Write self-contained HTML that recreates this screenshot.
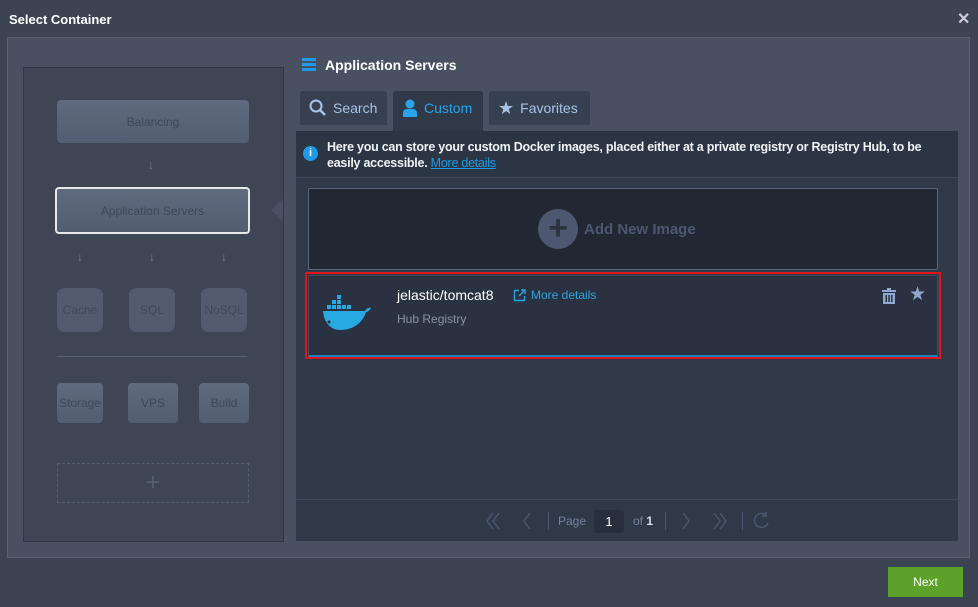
<!DOCTYPE html>
<html><head><style>
*{margin:0;padding:0;box-sizing:border-box}
body{width:978px;height:607px;background:#3c4352;font-family:"Liberation Sans",sans-serif;position:relative;overflow:hidden;color:#fff}
.a{position:absolute}
.title{left:9px;top:12px;font-size:13px;font-weight:bold;color:#fff}
.frame{left:7px;top:37px;width:963px;height:521px;background:#485062;border:1px solid #596173}
.left{left:23px;top:67px;width:261px;height:475px;background:#3e4555;border:1px solid #2f3542}
.box{background:linear-gradient(#606a7e,#535d70);border-radius:4px;color:#3f4759;font-size:12px;display:flex;align-items:center;justify-content:center}
.cyl{background:#535c6e;border-radius:8px/7px;color:#3f4759;font-size:12px;display:flex;align-items:center;justify-content:center}
.arr{color:#7a8294;font-size:12px;font-weight:bold}
.tab{top:91px;height:34px;background:#364051;border-radius:3px 3px 0 0;display:flex;align-items:center;gap:6px;padding-left:9px;font-size:14px;color:#a9c3e6}
.content{left:296px;top:131px;width:662px;height:410px;background:#2f3948}
.pg{color:#4d5870;font-size:13px}
</style></head><body>
<div class="a title">Select Container</div>
<div class="a" style="left:957px;top:9px;font-size:16px;font-weight:bold;color:#ccd">✕</div>
<div class="a frame"></div>
<div class="a left"></div>
<div class="a box" style="left:57px;top:100px;width:192px;height:43px">Balancing</div>
<div class="a arr" style="left:148px;top:158px">↓</div>
<div class="a box" style="left:55px;top:187px;width:195px;height:47px;border:2px solid #e6e8ec">Application Servers</div>
<div class="a" style="left:271px;top:199px;width:0;height:0;border-top:11px solid transparent;border-bottom:11px solid transparent;border-right:12px solid #485062"></div>
<div class="a arr" style="left:77px;top:250px">↓</div>
<div class="a arr" style="left:149px;top:250px">↓</div>
<div class="a arr" style="left:221px;top:250px">↓</div>
<div class="a cyl" style="left:57px;top:288px;width:46px;height:44px">Cache</div>
<div class="a cyl" style="left:129px;top:288px;width:46px;height:44px">SQL</div>
<div class="a cyl" style="left:201px;top:288px;width:46px;height:44px">NoSQL</div>
<div class="a" style="left:57px;top:356px;width:190px;height:1px;background:#566072"></div>
<div class="a box" style="left:57px;top:383px;width:46px;height:40px">Storage</div>
<div class="a box" style="left:128px;top:383px;width:50px;height:40px">VPS</div>
<div class="a box" style="left:199px;top:383px;width:50px;height:40px">Build</div>
<div class="a" style="left:57px;top:463px;width:192px;height:40px;border:1px dashed #566072;color:#566072;font-size:24px;text-align:center;line-height:38px">+</div>

<div class="a" style="left:302px;top:58px;width:14px;height:3px;background:#1e9be8;box-shadow:0 5px 0 #1e9be8,0 10px 0 #1e9be8"></div>
<div class="a" style="left:325px;top:57px;font-size:14px;font-weight:bold">Application Servers</div>

<div class="a tab" style="left:300px;width:87px;height:34px"><svg width="18" height="18" viewBox="0 0 18 18"><circle cx="7" cy="7" r="5.5" fill="none" stroke="#a9c3e6" stroke-width="2"/><path d="M11 11l5 5" stroke="#a9c3e6" stroke-width="2.5"/></svg>Search</div>
<div class="a tab" style="left:393px;width:90px;height:40px;background:#2f3948;color:#29a3ea;padding-bottom:6px"><svg width="16" height="18" viewBox="0 0 16 18"><circle cx="8" cy="5" r="4.5" fill="#29a3ea"/><path d="M1 18v-4a4 4 0 0 1 4-4h6a4 4 0 0 1 4 4v4z" fill="#29a3ea"/></svg>Custom</div>
<div class="a tab" style="left:489px;width:101px;height:34px"><span style="font-size:18px;color:#a9c3e6">★</span>Favorites</div>

<div class="a content"></div>
<div class="a" style="left:296px;top:131px;width:662px;height:47px;background:#2c3543;border-bottom:1px solid #404a5a"></div>
<div class="a" style="left:303px;top:146px;width:15px;height:15px;border-radius:50%;background:#1e9be8;color:#fff;font-size:11px;font-weight:bold;text-align:center;line-height:15px">i</div>
<div class="a" style="left:327px;top:139px;width:625px;font-size:12.5px;line-height:16px;font-weight:bold;color:#f0f2f5;letter-spacing:-0.25px">Here you can store your custom Docker images, placed either at a private registry or Registry Hub, to be easily accessible. <span style="color:#1e9be8;text-decoration:underline;font-weight:normal">More details</span></div>

<div class="a" style="left:308px;top:188px;width:630px;height:82px;background:#212833;border:1px solid #5a6478;border-radius:2px"></div>
<div class="a" style="left:538px;top:209px;width:40px;height:40px;border-radius:50%;background:#4d5870;color:#2b3240;font-size:34px;font-weight:bold;text-align:center;line-height:39px">+</div>
<div class="a" style="left:584px;top:221px;font-size:15px;font-weight:bold;color:#4d5870">Add New Image</div>

<div class="a" style="left:305px;top:272px;width:636px;height:87px;border:2px solid #e0141a"></div>
<div class="a" style="left:308px;top:275px;width:630px;height:82px;background:#2a3140;border:1px solid #3e4a5c;border-bottom:2px solid #1e7fc0"></div>
<svg class="a" style="left:322px;top:295px" width="52" height="38" viewBox="0 0 52 38"><g fill="#27a9e1"><rect x="15" y="0" width="4" height="4"/><rect x="10" y="5" width="4" height="4"/><rect x="15" y="5" width="4" height="4"/><rect x="5" y="10" width="4" height="4"/><rect x="10" y="10" width="4" height="4"/><rect x="15" y="10" width="4" height="4"/><rect x="20" y="10" width="4" height="4"/><rect x="25" y="10" width="4" height="4"/><path d="M1 16h42c2-3 4-4 6-3-1 2-3 4-5 4-3 10-12 18-26 18C9 35 2 28 1 16z"/></g><circle cx="7" cy="27" r="1.5" fill="#2a3140"/></svg>
<div class="a" style="left:397px;top:287px;font-size:14px;color:#fff">jelastic/tomcat8</div>
<svg class="a" style="left:513px;top:289px" width="13" height="13" viewBox="0 0 13 13"><path d="M6 1.5H1.5v10h10V7M8 1h4v4M12 1L6 7" fill="none" stroke="#2aa4e0" stroke-width="1.4"/></svg>
<div class="a" style="left:531px;top:288px;font-size:12px;color:#2aa4e0">More details</div>
<div class="a" style="left:397px;top:312px;font-size:12px;color:#8a93a6">Hub Registry</div>
<svg class="a" style="left:882px;top:288px" width="14" height="16" viewBox="0 0 14 16"><g fill="#93a8d0"><rect x="0" y="2" width="14" height="2"/><rect x="5" y="0" width="4" height="2"/><path d="M1 5h12v11H1z"/></g><g fill="#2a3140"><rect x="3.5" y="7" width="1.5" height="7"/><rect x="6.3" y="7" width="1.5" height="7"/><rect x="9" y="7" width="1.5" height="7"/></g></svg>
<div class="a" style="left:909px;top:283px;font-size:19px;color:#93a8d0">★</div>

<div class="a" style="left:296px;top:499px;width:662px;height:1px;background:#3f4a5a"></div>
<svg class="a" style="left:485px;top:512px" width="16" height="18" viewBox="0 0 16 18"><path d="M8 1L2 9l6 8M14 1L8 9l6 8" fill="none" stroke="#4d5870" stroke-width="1.4"/></svg>
<svg class="a" style="left:522px;top:512px" width="10" height="18" viewBox="0 0 10 18"><path d="M8 1L2 9l6 8" fill="none" stroke="#4d5870" stroke-width="1.4"/></svg>
<div class="a" style="left:548px;top:512px;width:1px;height:18px;background:#4d5870"></div>
<div class="a" style="left:558px;top:514px;font-size:12px;color:#75809a">Page</div>
<div class="a" style="left:594px;top:510px;width:30px;height:23px;background:#272f3c;border-radius:3px;text-align:center;line-height:23px;font-size:13px">1</div>
<div class="a" style="left:633px;top:514px;font-size:12px;color:#75809a">of <b style="color:#dde">1</b></div>
<div class="a" style="left:665px;top:512px;width:1px;height:18px;background:#4d5870"></div>
<svg class="a" style="left:681px;top:512px" width="10" height="18" viewBox="0 0 10 18"><path d="M2 1l6 8-6 8" fill="none" stroke="#4d5870" stroke-width="1.4"/></svg>
<svg class="a" style="left:712px;top:512px" width="16" height="18" viewBox="0 0 16 18"><path d="M2 1l6 8-6 8M8 1l6 8-6 8" fill="none" stroke="#4d5870" stroke-width="1.4"/></svg>
<div class="a" style="left:742px;top:512px;width:1px;height:18px;background:#4d5870"></div>
<svg class="a" style="left:753px;top:511px" width="18" height="20" viewBox="0 0 18 20"><path d="M13 4A7 7 0 1 0 15 12M13 1v4h-4" fill="none" stroke="#4d5870" stroke-width="1.5"/></svg>

<div class="a" style="left:888px;top:567px;width:75px;height:30px;background:#5ca12a;font-size:12px;text-align:center;line-height:30px;color:#fff">Next</div>
</body></html>
